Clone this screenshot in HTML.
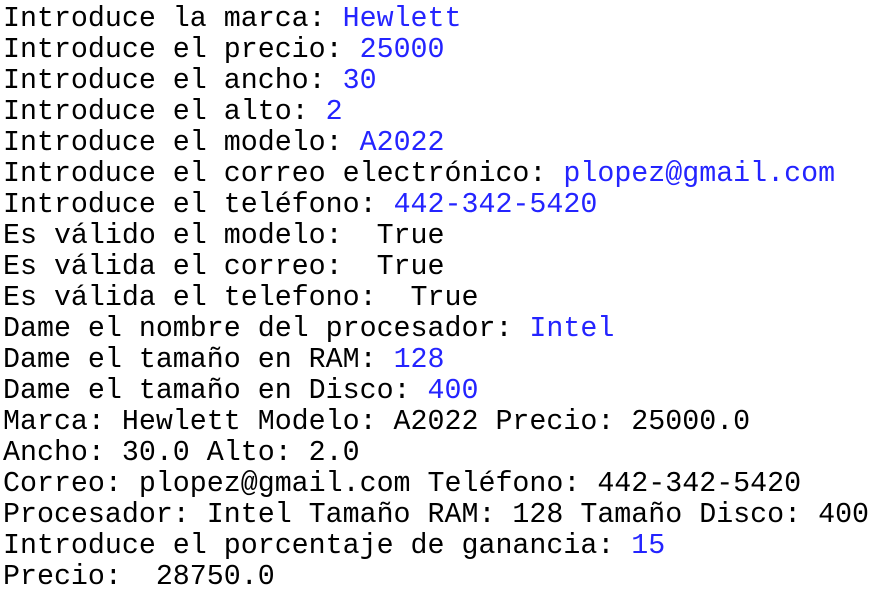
<!DOCTYPE html>
<html><head><meta charset="utf-8"><style>
html,body{margin:0;padding:0;background:#fff;width:876px;height:593px;overflow:hidden}
pre{margin:0;padding:4px 0 0 3px;font-family:"Liberation Mono","Courier New",monospace;font-size:28.3px;line-height:31px;color:#000}
b{font-weight:normal;color:#2424ff}
</style></head><body><pre>Introduce la marca: <b>Hewlett</b>
Introduce el precio: <b>25000</b>
Introduce el ancho: <b>30</b>
Introduce el alto: <b>2</b>
Introduce el modelo: <b>A2022</b>
Introduce el correo electrónico: <b>plopez@gmail.com</b>
Introduce el teléfono: <b>442-342-5420</b>
Es válido el modelo:  True
Es válida el correo:  True
Es válida el telefono:  True
Dame el nombre del procesador: <b>Intel</b>
Dame el tamaño en RAM: <b>128</b>
Dame el tamaño en Disco: <b>400</b>
Marca: Hewlett Modelo: A2022 Precio: 25000.0
Ancho: 30.0 Alto: 2.0
Correo: plopez@gmail.com Teléfono: 442-342-5420
Procesador: Intel Tamaño RAM: 128 Tamaño Disco: 400
Introduce el porcentaje de ganancia: <b>15</b>
Precio:  28750.0</pre></body></html>
